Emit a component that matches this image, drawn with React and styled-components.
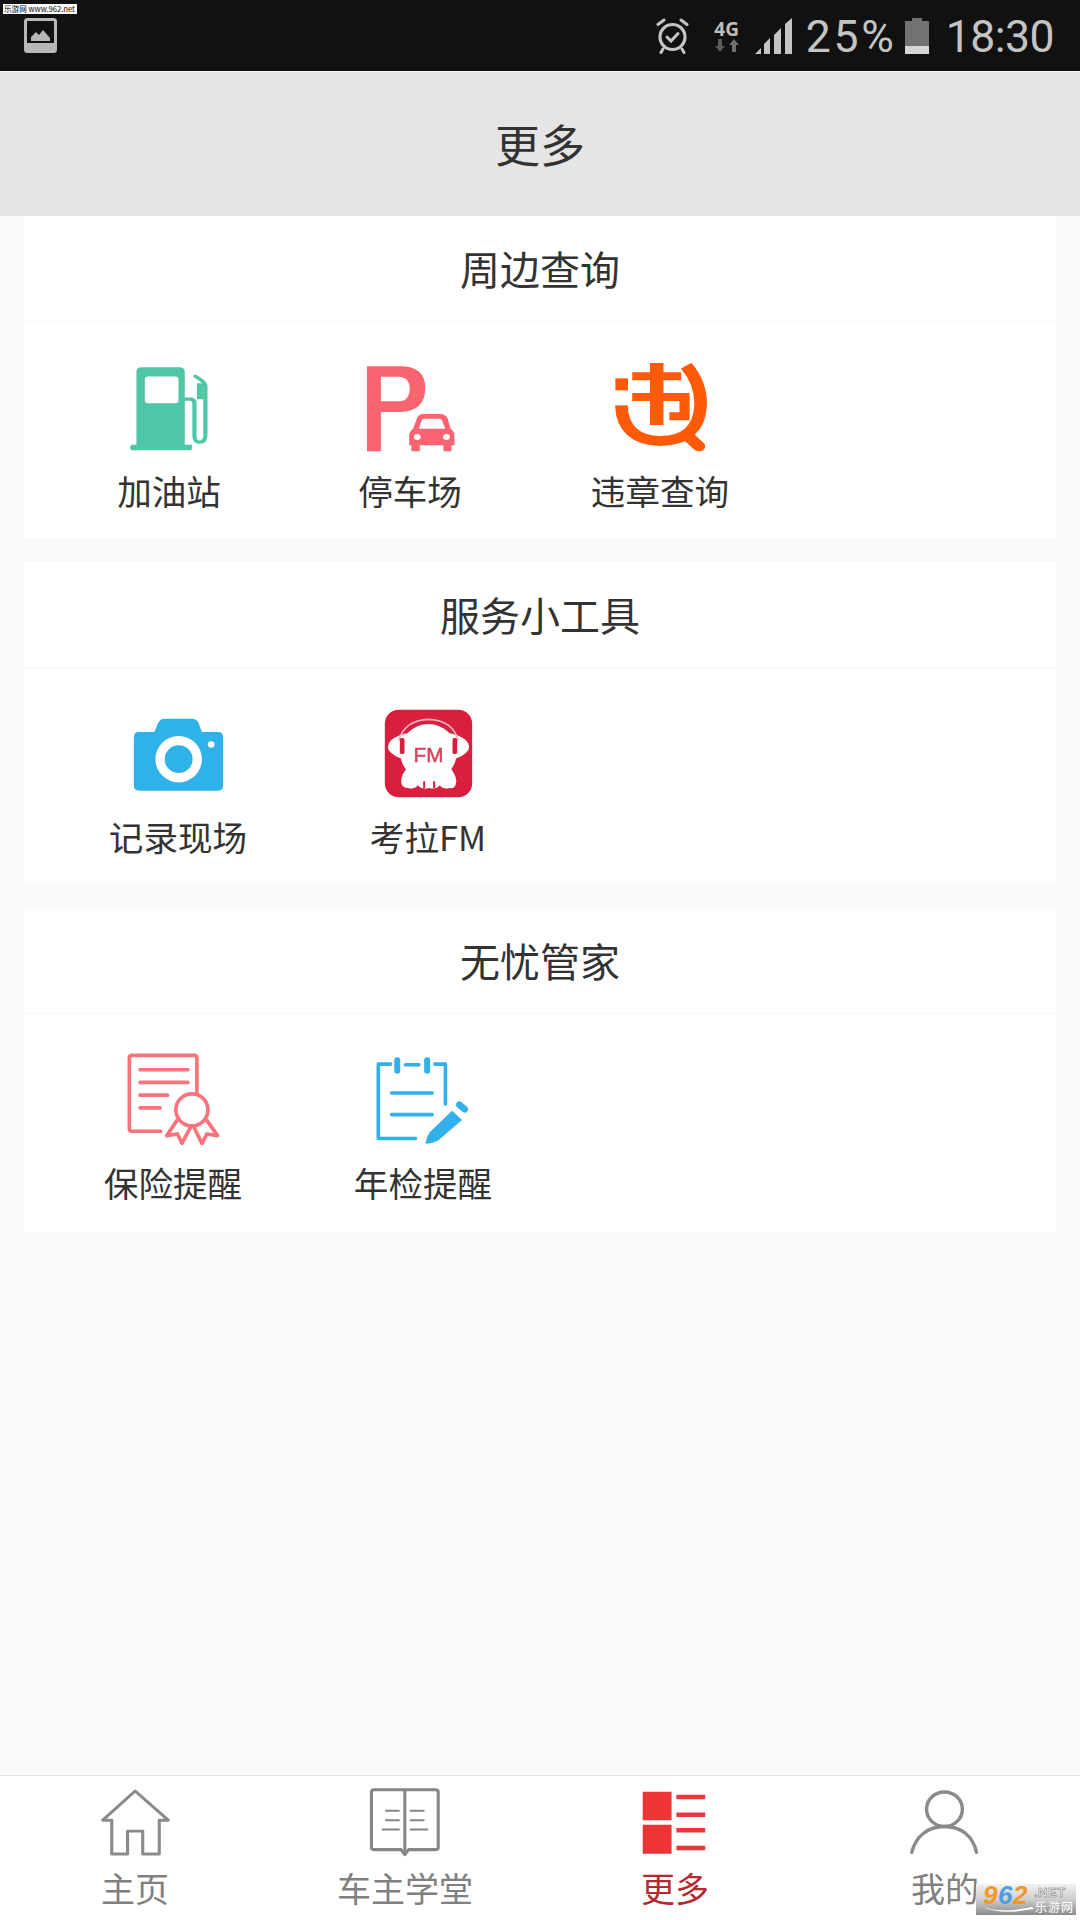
import React from "react";
import styled, { createGlobalStyle } from "styled-components";

const Global = createGlobalStyle`
  html, body { margin: 0; padding: 0; background: #fafafa; }
  * { box-sizing: border-box; }
`;

const CJK = `"Noto Sans CJK SC", "Noto Sans", sans-serif`;

const Page = styled.div`
  width: 1080px;
  height: 1920px;
  display: flex;
  flex-direction: column;
  position: relative;
  overflow: hidden;
  background: #fafafa;
  font-family: ${CJK};
`;

const StatusBar = styled.div`
  height: 72px;
  flex: none;
  background: #111111;
  border-bottom: 1px solid #f4f4f4;
  display: flex;
  align-items: center;
  padding: 0 26px 0 24px;
  color: #c4c4c4;
  position: relative;
`;

const Stamp = styled.div`
  position: absolute;
  left: 3px;
  top: 4px;
  width: 74px;
  height: 10px;
  background: #fff;
  color: #000;
  font: 7.6px/10px "Noto Sans CJK SC", "Liberation Sans", sans-serif;
  white-space: nowrap;
  padding-left: 1px;
`;

const StatusRight = styled.div`
  margin-left: auto;
  display: flex;
  align-items: center;
`;

const StatusText = styled.span`
  font-family: Roboto, sans-serif;
  font-size: 44.5px;
  line-height: 50px;
  letter-spacing: ${(p) => p.$track || 0}px;
  margin-left: ${(p) => p.$ml || 0}px;
  position: relative;
  top: 1px;
`;

const Glyph = styled.svg`
  display: block;
  flex: none;
  width: ${(p) => p.$w}px;
  height: ${(p) => p.$h}px;
  margin-left: ${(p) => p.$ml || 0}px;
  filter: blur(0.5px);
`;

const NetType = styled.div`
  margin-left: 23px;
  width: 30px;
  display: flex;
  flex-direction: column;
  align-items: center;
`;

const NetLabel = styled.span`
  font: bold 19px/19px "Open Sans", sans-serif;
  color: #bdbdbd;
`;

const Header = styled.header`
  height: 144px;
  flex: none;
  background: #e5e5e5;
  color: #333;
  font-size: 45px;
  line-height: 144px;
  text-align: center;
`;

const Content = styled.main`
  flex: 1;
  min-height: 0;
  padding: 0 24px;
  display: flex;
  flex-direction: column;
  gap: 24px;
`;

const Card = styled.section`
  background: #fff;
  height: ${(p) => p.$h}px;
`;

const CardTitle = styled.h2`
  margin: 0;
  height: 106px;
  border-bottom: 1px solid #f6f6f6;
  color: #333;
  font-size: 40px;
  font-weight: 400;
  line-height: 104px;
  text-align: center;
`;

const CardBody = styled.div`
  display: flex;
  padding-top: 38px;
`;

const Item = styled.div`
  width: 160px;
  margin-left: ${(p) => p.$ml}px;
  display: flex;
  flex-direction: column;
  align-items: center;
`;

const IconBox = styled.div`
  height: 96px;
  display: flex;
  align-items: center;
  justify-content: center;
`;

const ItemLabel = styled.span`
  margin-top: 12px;
  font-size: 34.6px;
  line-height: 44px;
  color: #333;
  white-space: nowrap;
`;

const TabBar = styled.nav`
  height: 145px;
  flex: none;
  background: #fff;
  border-top: 1px solid #e4e4e4;
  display: flex;
  padding-top: 12px;
`;

const Tab = styled.div`
  flex: 1;
  display: flex;
  flex-direction: column;
  align-items: center;
`;

const TabIcon = styled.div`
  height: 68px;
  display: flex;
  align-items: center;
`;

const TabLabel = styled.span`
  margin-top: 10px;
  font-size: 34px;
  line-height: 44px;
  color: ${(p) => (p.$active ? "#b52a2e" : "#808080")};
  white-space: nowrap;
`;

const Badge = styled.div`
  position: absolute;
  left: 976px;
  top: 1884px;
  width: 100px;
  height: 31px;
  background: linear-gradient(180deg, #f2f2f2 0%, #cdcdcd 50%, #8c8c8c 100%);
`;

const BadgeNum = styled.span`
  position: absolute;
  left: 7px;
  top: -2px;
  font: italic bold 26px/26px "Liberation Sans", sans-serif;
  color: #f0982a;
  letter-spacing: 0.5px;
`;

const BadgeBlue = styled.span`
  color: #4f9fe0;
`;

const BadgeNet = styled.span`
  position: absolute;
  left: 58px;
  top: 1px;
  font: bold 13px/15px "Liberation Sans", sans-serif;
  color: #f4f4f4;
  letter-spacing: 0.5px;
  -webkit-text-stroke: 0.5px #6f6f6f;
`;

const BadgeCn = styled.span`
  position: absolute;
  left: 59px;
  top: 15px;
  font: 12px/15px ${CJK};
  color: #fff;
  letter-spacing: 1px;
`;

const BadgeSwoosh = styled.svg`
  position: absolute;
  left: 4px;
  top: 20px;
  width: 54px;
  height: 10px;
`;

const none = "none";

const PumpIcon = () => (
  <Glyph $w={82} $h={88} viewBox="90 70 195 265" preserveAspectRatio={none}>
    <path fill="#4fc7a6" fillRule="evenodd" d="M122 80H212Q225 80 225 94V313H242Q244 322 240 330H98Q92 322 98 313H110V94Q110 80 122 80ZM138 108Q130 108 130 116V180Q130 188 138 188H202Q210 188 210 180V116Q210 108 202 108Z" />
    <path fill="none" stroke="#4fc7a6" strokeWidth="10" strokeLinecap="round" d="M226 176H238Q248 176 248 188V285Q248 305 260 305Q274 305 274 285V135Q274 125 250 107" />
    <path fill="none" stroke="#4fc7a6" strokeWidth="16" d="M262 128V176" />
  </Glyph>
);

const ParkingIcon = () => (
  <Glyph $w={93} $h={89} viewBox="650 68 220 267" preserveAspectRatio={none}>
    <path fill="#fa6470" fillRule="evenodd" d="M657 75H735Q795 75 795 140Q795 210 735 212H690V330H657ZM690 106V180H730Q758 180 758 142Q758 106 730 106Z" />
    <path fill="#fa6470" fillRule="evenodd" d="M790 218H830Q843 218 848 232L855 262Q864 270 864 282V312H857V330H838V312H782V330H762V312H757V282Q757 270 766 262L775 232Q779 218 790 218ZM793 232Q788 232 786 238L780 262H842L835 238Q833 232 828 232Z" />
    <ellipse cx="776" cy="287" rx="8" ry="9" fill="#fff" />
    <ellipse cx="845" cy="287" rx="8" ry="9" fill="#fff" />
  </Glyph>
);

const ViolationIcon = () => (
  <Glyph $w={97} $h={91} viewBox="1240 68 230 273" preserveAspectRatio={none}>
    <g fill="none" stroke="#ff5a0a">
      <path strokeWidth="30" d="M1416 76Q1452 130 1450 195Q1446 300 1355 302Q1266 300 1262 195" />
      <path strokeWidth="30" strokeLinecap="round" d="M1418 285L1446 318" />
      <path strokeWidth="36" d="M1248 132H1278" />
      <path strokeWidth="32" d="M1346 68V254" />
      <path strokeWidth="24" d="M1288 108H1404" />
      <path strokeWidth="24" d="M1288 170H1412V228H1376" />
    </g>
  </Glyph>
);

const CameraIcon = () => (
  <Glyph $w={95} $h={77} viewBox="125 75 285 232">
    <path fill="#2fb1e9" d="M148 123H195L206 96Q212 83 226 83H308Q322 83 328 96L338 123H386Q402 123 402 139V284Q402 300 386 300H149Q133 300 133 284V139Q133 123 148 123Z" />
    <circle cx="268" cy="205" r="56" fill="none" stroke="#fff" strokeWidth="28" />
    <circle cx="366" cy="161" r="10" fill="#fff" />
  </Glyph>
);

const FmIcon = () => (
  <Glyph $w={91} $h={91} viewBox="880 55 272 273">
    <rect x="885" y="57" width="262" height="263" rx="42" fill="#d81f3e" />
    <ellipse cx="1016" cy="168" rx="122" ry="48" fill="#fff" />
    <circle cx="1016" cy="185" r="85" fill="#fff" />
    <path fill="#fff" d="M950 235Q1016 215 1084 235Q1104 262 1098 280Q1094 296 1078 292Q1060 298 1050 284Q1040 298 1018 292Q996 298 984 284Q972 298 954 292Q934 292 934 272Q934 252 950 235Z" />
    <path fill="#d81f3e" d="M1000 272h6v20h-6zM1030 272h6v20h-6z" />
    <path fill="none" stroke="#f4b0bc" strokeWidth="5" d="M926 150Q945 88 1016 86Q1088 88 1106 150" />
    <rect x="930" y="142" width="14" height="48" rx="5" fill="#d81f3e" />
    <rect x="1088" y="142" width="14" height="48" rx="5" fill="#d81f3e" />
    <text x="1016" y="214" textAnchor="middle" fontFamily="Liberation Sans, sans-serif" fontSize="62" fill="#d9415a" stroke="#d9415a" strokeWidth="1.5">FM</text>
  </Glyph>
);

const CertIcon = () => (
  <Glyph $w={97} $h={97} viewBox="105 35 290 290">
    <g fill="none" stroke="#f8737b" strokeLinejoin="round" strokeLinecap="round">
      <path strokeWidth="11" d="M212 272H126Q118 272 118 264V53Q118 45 126 45H312Q320 45 320 53V160" />
      <path strokeWidth="11" d="M150 88H293M150 126H293M150 164H232M150 202H210" />
      <circle cx="305" cy="208" r="48" strokeWidth="11" />
      <path strokeWidth="11" d="M260 240L230 285L262 280L275 308L300 262M350 240L382 285L350 280L335 308L312 262" />
    </g>
  </Glyph>
);

const NoteIcon = () => (
  <Glyph $w={98} $h={95} viewBox="855 35 295 285">
    <g fill="none" stroke="#31b0ea" strokeLinecap="round" strokeLinejoin="round">
      <path strokeWidth="11" d="M905 68H868V292H980M950 70H990M1038 68H1070V188" />
      <path strokeWidth="18" d="M925 56V88M1015 56V88" />
      <path strokeWidth="11" d="M908 155H1030M908 220H1030" />
    </g>
    <path fill="#31b0ea" d="M1090 208L1120 236L1048 298Q1030 308 1010 308Q1012 290 1022 274Z" />
    <path stroke="#31b0ea" strokeWidth="20" strokeLinecap="round" d="M1112 190L1128 204" />
  </Glyph>
);

const HomeIcon = () => (
  <Glyph $w={73} $h={69} viewBox="285 85 212 208" preserveAspectRatio={none}>
    <path fill="none" stroke="#8a8a8a" strokeWidth="9" strokeLinejoin="round" d="M322 284V182H296L390 94L486 182H460V284H412V215H368V284Z" />
  </Glyph>
);

const BookIcon = () => (
  <Glyph $w={74} $h={72} viewBox="1068 78 215 215" preserveAspectRatio={none}>
    <g fill="none" stroke="#868686" strokeLinejoin="round">
      <path strokeWidth="9" d="M1085 89H1265Q1272 89 1272 96V262Q1272 268 1265 268H1186L1175 283L1164 268H1085Q1078 268 1078 262V96Q1078 89 1085 89Z" />
      <path strokeWidth="9" d="M1175 89V275" />
      <path strokeWidth="6" d="M1118 152H1160M1118 180H1160M1108 208H1160M1190 152H1232M1190 180H1232M1190 208H1243" />
    </g>
  </Glyph>
);

const MoreIcon = () => (
  <Glyph $w={68} $h={67} viewBox="293 92 198 200" preserveAspectRatio={none}>
    <path fill="#ee3535" d="M298 100H382V185H298ZM298 199H382V285H298Z" />
    <path stroke="#e8383c" strokeWidth="13" d="M396 116H480M396 169H480M396 215H480M396 268H480" />
  </Glyph>
);

const PersonIcon = () => (
  <Glyph $w={73} $h={68} viewBox="1072 82 212 205" preserveAspectRatio={none}>
    <g fill="none" stroke="#8a8a8a" strokeWidth="10" strokeLinecap="round">
      <circle cx="1175" cy="146" r="52" />
      <path d="M1080 276C1092 224 1130 198 1175 198C1220 198 1258 224 1268 276" />
    </g>
  </Glyph>
);

const ImageNotice = () => (
  <Glyph $w={33} $h={35} viewBox="0 0 33 35">
    <rect x="1.5" y="1.5" width="30" height="32" rx="2" fill="none" stroke="#b8b8b8" strokeWidth="3" />
    <rect x="1.5" y="25" width="30" height="8.5" fill="#b8b8b8" />
    <path fill="#b8b8b8" d="M7 23V19L12 14L15 17L19 12L26 20V23Z" />
  </Glyph>
);

const AlarmIcon = () => (
  <Glyph $w={33} $h={36} viewBox="0 0 33 36">
    <g fill="none" stroke="#c4c4c4" strokeLinecap="round">
      <circle cx="16.5" cy="19" r="12.5" strokeWidth="3.2" />
      <path strokeWidth="3" d="M11 19L15 23L22 15.5" />
      <path strokeWidth="3" d="M2 6.5L8 2M31 6.5L25 2M7 31L5 34.5M26 31L28 34.5" />
    </g>
  </Glyph>
);

const ArrowsIcon = () => (
  <Glyph $w={24} $h={13} viewBox="0 0 24 13">
    <path fill="#5a5a5a" d="M3 0H7V7H10L5 13L0 7H3Z" />
    <path fill="#6e6e6e" d="M17 13H21V6H24L19 0L14 6H17Z" />
  </Glyph>
);

const SignalIcon = () => (
  <Glyph $w={37} $h={36} $ml={13} viewBox="0 0 37 36">
    <path fill="#c4c4c4" d="M0 36L6 30V36ZM9 36V26L15 20V36ZM19 36V17L26 10V36ZM30 36V6L37 0V36Z" />
  </Glyph>
);

const BatteryIcon = () => (
  <Glyph $w={24} $h={36} $ml={8} viewBox="0 0 24 36">
    <path fill="#727272" d="M7 0H17V3H24V28H0V3H7Z" />
    <rect y="28" width="24" height="8" fill="#d6d6d6" />
  </Glyph>
);

const sections = [
  {
    title: "周边查询",
    height: 322,
    items: [
      { label: "加油站", Icon: PumpIcon, ml: 65 },
      { label: "停车场", Icon: ParkingIcon, ml: 81 },
      { label: "违章查询", Icon: ViolationIcon, ml: 90 },
    ],
  },
  {
    title: "服务小工具",
    height: 322,
    items: [
      { label: "记录现场", Icon: CameraIcon, ml: 74 },
      { label: "考拉FM", Icon: FmIcon, ml: 90 },
    ],
  },
  {
    title: "无忧管家",
    height: 324,
    items: [
      { label: "保险提醒", Icon: CertIcon, ml: 69 },
      { label: "年检提醒", Icon: NoteIcon, ml: 90 },
    ],
  },
];

const tabs = [
  { label: "主页", Icon: HomeIcon },
  { label: "车主学堂", Icon: BookIcon },
  { label: "更多", Icon: MoreIcon, active: true },
  { label: "我的", Icon: PersonIcon },
];

export default function App() {
  return (
    <Page>
      <Global />
      <StatusBar>
        <Stamp>乐游网 www.962.net</Stamp>
        <ImageNotice />
        <StatusRight>
          <AlarmIcon />
          <NetType>
            <NetLabel>4G</NetLabel>
            <ArrowsIcon />
          </NetType>
          <SignalIcon />
          <StatusText $ml={14} $track={2.8}>25%</StatusText>
          <BatteryIcon />
          <StatusText $ml={17} $track={-0.5}>18:30</StatusText>
        </StatusRight>
      </StatusBar>
      <Header>更多</Header>
      <Content>
        {sections.map((s) => (
          <Card key={s.title} $h={s.height}>
            <CardTitle>{s.title}</CardTitle>
            <CardBody>
              {s.items.map(({ label, Icon, ml }) => (
                <Item key={label} $ml={ml}>
                  <IconBox>
                    <Icon />
                  </IconBox>
                  <ItemLabel>{label}</ItemLabel>
                </Item>
              ))}
            </CardBody>
          </Card>
        ))}
      </Content>
      <TabBar>
        {tabs.map(({ label, Icon, active }) => (
          <Tab key={label}>
            <TabIcon>
              <Icon />
            </TabIcon>
            <TabLabel $active={active}>{label}</TabLabel>
          </Tab>
        ))}
      </TabBar>
      <Badge>
        <BadgeNum>
          9<BadgeBlue>6</BadgeBlue>2
        </BadgeNum>
        <BadgeNet>.NET</BadgeNet>
        <BadgeCn>乐游网</BadgeCn>
        <BadgeSwoosh viewBox="0 0 54 10">
          <path fill="#fff" d="M0 2Q20 10 52 3L54 5L46 6Q20 11 0 2Z" />
        </BadgeSwoosh>
      </Badge>
    </Page>
  );
}
